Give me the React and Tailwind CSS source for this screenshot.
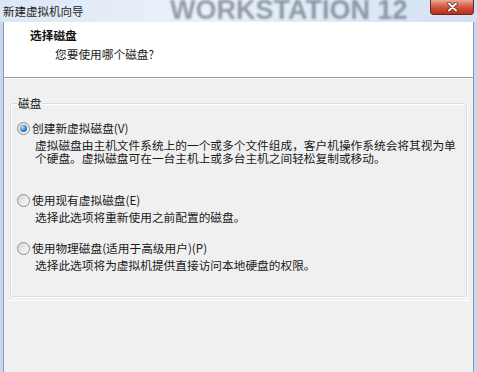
const FONT = { fontFamily: '"Noto Sans CJK SC", "Noto Sans", sans-serif' };

function Radio({ checked }) {
  return (
    <span className="inline-flex w-[13px] h-[13px] rounded-full border border-[#8e8f8f] bg-[linear-gradient(135deg,#d6d6d6,#fbfbfb)] items-center justify-center shrink-0">
      {checked && (
        <span className="w-[7px] h-[7px] rounded-full bg-[radial-gradient(circle_at_35%_35%,#b8e2fb,#2b7fd0_55%,#0d4c98)]" />
      )}
    </span>
  );
}

function Option({ checked, label, lines, className = '' }) {
  return (
    <div className={className}>
      <div className="flex items-center gap-[2px] h-[16px]">
        <Radio checked={checked} />
        <span className="text-[11.7px] leading-[16px] text-[#1a1a1a]">{label}</span>
      </div>
      <div className="pl-[18px] pt-[2px]">
        {lines.map((l) => (
          <p key={l} className="text-[11.7px] leading-[13px] text-[#1a1a1a] whitespace-nowrap">{l}</p>
        ))}
      </div>
    </div>
  );
}

function CloseButton() {
  return (
    <div className="w-[44px] h-[15px] rounded-b-[4px] border border-t-0 border-[#6e261c] bg-[#c9462f] bg-[linear-gradient(180deg,#e9ab9c,#d65a42_45%,#b52f1a)] flex items-center justify-center">
      <svg width="11" height="10" viewBox="0 0 11 10">
        <path d="M2 1.5 L9 8.5 M9 1.5 L2 8.5" stroke="#5a1a12" strokeWidth="3.2" strokeLinecap="round" />
        <path d="M2 1.5 L9 8.5 M9 1.5 L2 8.5" stroke="#fff" strokeWidth="2" strokeLinecap="round" />
      </svg>
    </div>
  );
}

export default function App() {
  return (
    <div style={FONT} className="w-[477px] h-[372px] overflow-hidden bg-[#c6d8ee] flex flex-col">
      {/* Title bar */}
      <div className="h-[22px] shrink-0 grid grid-cols-[1fr_44px] gap-[0px] pr-[3px] bg-[linear-gradient(90deg,#dbe7f5,#eaf1f9_40%,#d2e1f2)] overflow-hidden">
        <div className="relative">
          <span className="absolute left-[170px] top-[-6px] text-[27px] leading-[32px] font-black text-[#3c4856] opacity-50 blur-[1.2px] whitespace-nowrap" style={{ fontFamily: '"Liberation Sans", sans-serif' }}>
            WORKSTATION 12
          </span>
          <span className="relative ml-[3px] mt-[3px] block text-[11.5px] leading-[16px] text-[#1e1e1e]">新建虚拟机向导</span>
        </div>
        <CloseButton />
      </div>

      {/* Client area */}
      <div className="flex-1 flex flex-col mx-[3px] border-x border-[#8a99ab] bg-[#f0f0f0]">
        {/* Header */}
        <div className="h-[56px] bg-white border-b border-[#a0a0a0] px-[26px] pt-[5px]">
          <p className="text-[11.7px] leading-[16px] font-bold text-[#111]">选择磁盘</p>
          <p className="text-[11.7px] leading-[16px] text-[#1a1a1a] pl-[25px] pt-[3px]">您要使用哪个磁盘?</p>
        </div>
        <div className="h-px bg-white" />

        {/* Group box */}
        <div className="relative mx-[6px] mt-[24px] h-[194px] border border-[#d5dfe5] rounded-[3px] shadow-[inset_1px_1px_0_#fff,1px_1px_0_#fff]">
          <span className="absolute left-[6px] top-[-9px] px-[1px] bg-[#f0f0f0] text-[11.7px] leading-[16px] text-[#1a1a1a]">磁盘</span>
          <div className="pl-[6px] pt-[16px]">
            <Option
              checked
              label="创建新虚拟磁盘(V)"
              lines={[
                '虚拟磁盘由主机文件系统上的一个或多个文件组成，客户机操作系统会将其视为单',
                '个硬盘。虚拟磁盘可在一台主机上或多台主机之间轻松复制或移动。',
              ]}
            />
            <Option
              className="mt-[28px]"
              label="使用现有虚拟磁盘(E)"
              lines={['选择此选项将重新使用之前配置的磁盘。']}
            />
            <Option
              className="mt-[17px]"
              label="使用物理磁盘(适用于高级用户)(P)"
              lines={['选择此选项将为虚拟机提供直接访问本地硬盘的权限。']}
            />
          </div>
        </div>
        <div className="mx-[4px] mt-[3px] h-px bg-[#dcdcdc] border-b border-white" />
      </div>
    </div>
  );
}
